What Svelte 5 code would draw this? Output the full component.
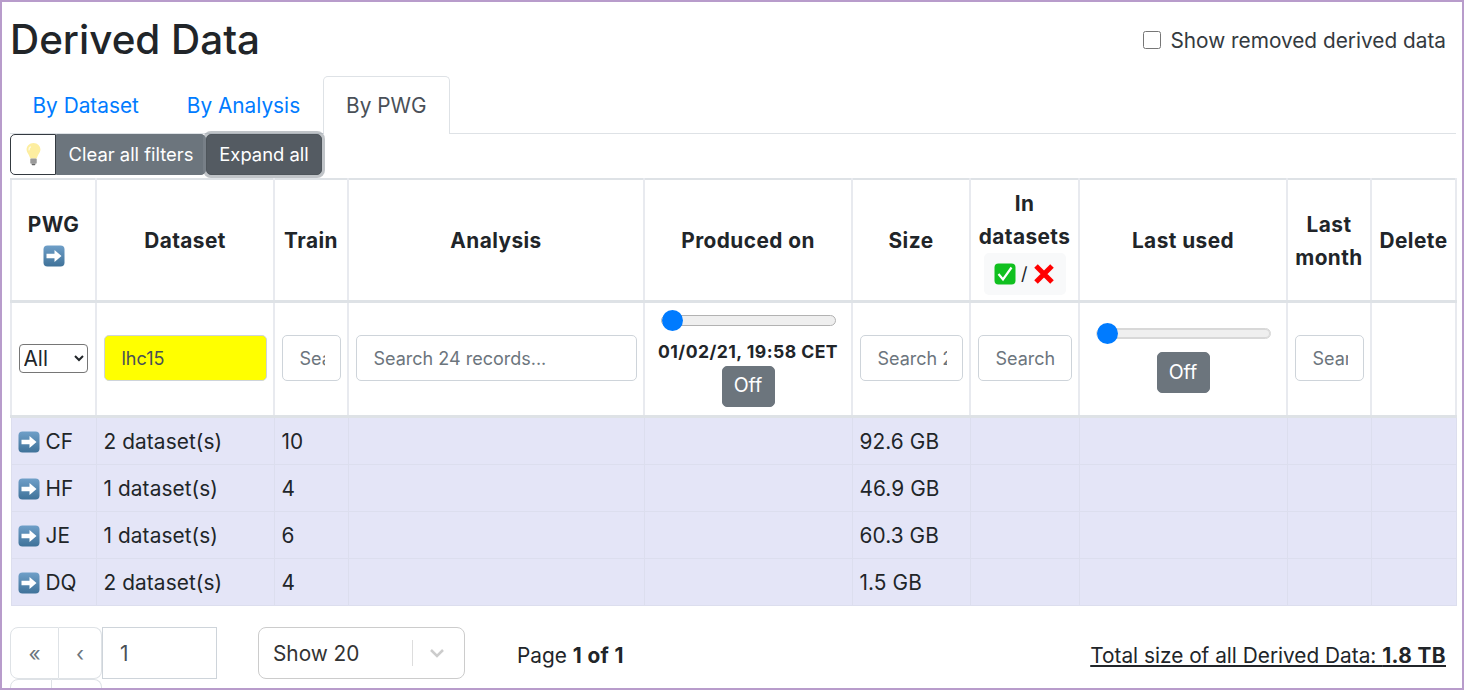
<script lang="ts">
	const rows = [
		{ pwg: 'CF', datasets: '2 dataset(s)', train: '10', size: '92.6 GB' },
		{ pwg: 'HF', datasets: '1 dataset(s)', train: '4', size: '46.9 GB' },
		{ pwg: 'JE', datasets: '1 dataset(s)', train: '6', size: '60.3 GB' },
		{ pwg: 'DQ', datasets: '2 dataset(s)', train: '4', size: '1.5 GB' }
	];
</script>

{#snippet arrow()}
	<svg class="arrow" viewBox="0 0 22 22" aria-hidden="true">
		<defs>
			<linearGradient id="arrowbg" x1="0" y1="0" x2="0" y2="1">
				<stop offset="0" stop-color="#6f9fc8" />
				<stop offset="1" stop-color="#3f7299" />
			</linearGradient>
		</defs>
		<rect x="0.5" y="0.5" width="21" height="21" rx="4" fill="url(#arrowbg)" />
		<path d="M3.5 8.8h8V5l7 6-7 6v-3.8h-8z" fill="#fff" />
	</svg>
{/snippet}

<div class="frame">
	<header class="top">
		<h1>Derived Data</h1>
		<label class="removed"><input type="checkbox" /> Show removed derived data</label>
	</header>

	<nav class="tabs">
		<a href="#dataset">By Dataset</a>
		<a href="#analysis">By Analysis</a>
		<a href="#pwg" class="active">By PWG</a>
	</nav>

	<div class="toolbar">
		<button class="btn light" aria-label="Hints">
			<svg viewBox="0 0 18 26" width="17" height="24" aria-hidden="true">
				<path d="M9 1C4.6 1 1.5 4.2 1.5 8.2c0 3.6 3.2 5.6 3.9 9.8h7.2c.7-4.2 3.9-6.2 3.9-9.8C16.5 4.2 13.4 1 9 1z" fill="#fdeea0" />
				<path d="M6 5c-1.5 1-2 2.5-1.8 4" stroke="#fffbe3" stroke-width="1.5" fill="none" />
				<rect x="5.5" y="18" width="7" height="5.5" rx="1" fill="#9a9a9a" />
				<rect x="7" y="23.5" width="4" height="1.8" rx=".8" fill="#666" />
			</svg>
		</button>
		<button class="btn clear">Clear all filters</button>
		<button class="btn expand">Expand all</button>
	</div>

	<table>
		<colgroup>
			<col style="width:85px" /><col style="width:178px" /><col style="width:74px" /><col style="width:296px" />
			<col style="width:208px" /><col style="width:118px" /><col style="width:109px" /><col style="width:208px" />
			<col style="width:84px" /><col style="width:85px" />
		</colgroup>
		<thead>
			<tr class="heads">
				<th>PWG<br />{@render arrow()}</th>
				<th>Dataset</th>
				<th>Train</th>
				<th>Analysis</th>
				<th>Produced on</th>
				<th>Size</th>
				<th>
					In datasets
					<span class="badge">
						<svg viewBox="0 0 22 22" width="22" height="22" aria-hidden="true">
							<rect x="0.5" y="0.5" width="21" height="21" rx="4" fill="#10c01f" />
							<path d="M4.5 11l4.5 5.5L17.5 4.5" stroke="#fff" stroke-width="2.2" fill="none" />
						</svg>
						<span class="slash">/</span>
						<svg viewBox="0 0 22 22" width="22" height="22" aria-hidden="true">
							<path d="M3 3l16 16M19 3L3 19" stroke="#f00" stroke-width="5" />
						</svg>
					</span>
				</th>
				<th>Last used</th>
				<th>Last month</th>
				<th>Delete</th>
			</tr>
			<tr class="filters">
				<th>
					<select><option>All</option></select>
				</th>
				<th><input class="search hit" value="lhc15" /></th>
				<th><input class="search" placeholder="Search 24 records..." /></th>
				<th><input class="search" placeholder="Search 24 records..." /></th>
				<th>
					<input class="range" type="range" min="0" max="100" value="0" />
					<div class="date">01/02/21, 19:58 CET</div>
					<button class="btn off">Off</button>
				</th>
				<th><input class="search" placeholder="Search 24 records..." /></th>
				<th><input class="search" placeholder="Search" /></th>
				<th>
					<input class="range used" type="range" min="0" max="100" value="0" />
					<button class="btn off">Off</button>
				</th>
				<th><input class="search" placeholder="Search 24 records..." /></th>
				<th></th>
			</tr>
		</thead>
		<tbody>
			{#each rows as row}
				<tr>
					<td class="pwg">{@render arrow()} {row.pwg}</td>
					<td>{row.datasets}</td>
					<td>{row.train}</td>
					<td></td>
					<td></td>
					<td>{row.size}</td>
					{#each [1, 2, 3, 4] as _}
						<td></td>
					{/each}
				</tr>
			{/each}
		</tbody>
	</table>

	<footer class="foot">
		<div class="pager">
			<div class="pages">
				<button class="pg first">«</button>
				<button class="pg prev">‹</button>
				<input class="goto" value="1" />
				<button class="pg next" aria-label="Next"></button>
				<button class="pg last" aria-label="Last"></button>
			</div>
		</div>
		<div class="show">
			<span class="show-val">Show 20</span>
			<span class="sep"></span>
			<svg viewBox="0 0 20 20" width="20" height="20" aria-hidden="true">
				<path d="M4 7l6 6 6-6" stroke="#ccc" stroke-width="2.5" fill="none" />
			</svg>
		</div>
		<div class="page-of">Page <b>1 of 1</b></div>
		<div class="total">Total size of all Derived Data: <b>1.8 TB</b></div>
	</footer>
</div>

<style>
	:global(body) {
		margin: 0;
		overflow: hidden;
		background: #fff;
	}

	.frame {
		box-sizing: border-box;
		height: 690px;
		border: 2px solid #b89ccb;
		padding: 0 6px 0 8px;
		overflow: hidden;
		font-family: Inter, sans-serif;
		font-size: 20.8px;
		color: #212529;
	}

	b {
		letter-spacing: 0.4px;
	}

	.top {
		display: flex;
		justify-content: space-between;
		align-items: center;
		height: 74px;
	}

	h1 {
		margin: 2px 0 0;
		font-size: 40.4px;
		font-weight: 500;
		line-height: 74px;
	}

	.removed {
		display: flex;
		align-items: center;
		gap: 9px;
		padding-right: 10px;
		color: #343a40;
		margin-top: 3px;
	}

	.removed input {
		width: 18px;
		height: 18px;
		margin: -2px 0 0;
	}

	.tabs {
		display: flex;
		height: 57px;
		border-bottom: 1px solid #dee2e6;
		box-sizing: content-box;
	}

	.tabs a {
		padding: 0 22.5px;
		line-height: 58px;
		color: #007bff;
		text-decoration: none;
		border: 1px solid transparent;
		border-bottom: 0;
		border-radius: 5px 5px 0 0;
		height: 58px;
		box-sizing: border-box;
		margin-bottom: -1px;
	}

	.tabs a:first-child {
		padding: 0 23.5px 0 21.5px;
	}

	.tabs a.active {
		color: #495057;
		background: #fff;
		border-color: #dee2e6;
		margin-left: -1px;
	}

	.toolbar {
		display: flex;
		height: 41px;
	}

	.btn {
		font: inherit;
		font-size: 18.4px;
		color: #fff;
		background: #6c757d;
		border: 1px solid #6c757d;
		border-radius: 5px;
		padding: 0 0 2px;
		white-space: nowrap;
		cursor: pointer;
	}

	.btn.light {
		width: 46px;
		background: #fff;
		border-color: #343a40;
		border-radius: 5px 0 0 5px;
		display: flex;
		align-items: center;
		justify-content: center;
	}

	.btn.clear {
		width: 150px;
		border-radius: 0 5px 5px 0;
	}

	.btn.expand {
		width: 116px;
		margin-right: 0;
		background: #545b62;
		border-color: #4e555b;
		box-shadow: 0 0 0 3px rgba(130, 138, 145, 0.5);
		position: relative;
	}

	table {
		table-layout: fixed;
		border-collapse: collapse;
		width: 1445px;
		margin: 3px 0 0;
	}

	th,
	td {
		border: 2px solid #e8eaef;
		padding: 0 6.5px;
	}

	.heads th {
		height: 119px;
		border-top: 2px solid #dee2e6;
		border-bottom: 3px solid #dee2e6;
		font-weight: 700;
		letter-spacing: 0.45px;
		line-height: 33px;
		text-align: center;
		padding-top: 1px;
	}

	.heads .arrow {
		vertical-align: -2px;
	}

	.filters th {
		height: 110px;
		padding-bottom: 2px;
		border-bottom: 3px solid #dee2e6;
		text-align: center;
		font-weight: 700;
	}

	.arrow {
		width: 22px;
		height: 22px;
		vertical-align: -4px;
	}

	.badge {
		display: flex;
		align-items: center;
		justify-content: center;
		gap: 5px;
		width: 82px;
		height: 42px;
		margin: 0 auto;
		background: #f8f9fa;
		border-radius: 5px;
		font-weight: 400;
	}

	.slash {
		font-size: 18px;
	}

	select {
		width: 69px;
		height: 29px;
		font: 20.8px Inter, sans-serif;
		color: #212529;
		background: #fff;
		border: 1px solid #767676;
		border-radius: 4px;
		display: block;
		margin: 0;
	}

	.search {
		box-sizing: border-box;
		display: block;
		width: 100%;
		height: 46px;
		margin: 0;
		padding: 0 15px 0 17px;
		font: 400 18px Inter, sans-serif;
		color: #495057;
		background: #fff;
		border: 1px solid #ced4da;
		border-radius: 5px;
	}

	.search::placeholder {
		color: #6c757d;
		opacity: 1;
	}

	.search.hit {
		background: #ff0;
	}

	.range {
		-webkit-appearance: none;
		appearance: none;
		display: block;
		box-sizing: border-box;
		width: 175px;
		height: 21px;
		margin: 0 auto;
		background: transparent;
	}

	.range::-webkit-slider-runnable-track {
		height: 11px;
		background: #efefef;
		border: 1px solid #b2b2b2;
		border-radius: 6px;
		box-sizing: border-box;
	}

	.range.used::-webkit-slider-runnable-track {
		border-color: #d8d8d8;
		box-shadow: inset 0 0 0 1px #d8d8d8;
	}

	.range::-webkit-slider-thumb {
		-webkit-appearance: none;
		width: 21px;
		height: 21px;
		margin-top: -6px;
		border-radius: 50%;
		background: #007bff;
	}

	.date {
		font-size: 17.6px;
		letter-spacing: 0.45px;
		line-height: 24px;
		margin: 9px 0 2px;
		white-space: nowrap;
	}

	.btn.off {
		width: 53px;
		height: 41px;
		font-weight: 400;
		font-size: 19.5px;
		display: block;
		margin: 0 auto;
	}

	.used + .btn.off {
		margin-top: 8px;
	}

	tbody td {
		height: 45px;
		background: #e4e5f7;
		border: 1px solid #dcdeee;
		padding: 1px 7px 0;
		letter-spacing: 0.1px;
	}

	tbody td.pwg {
		padding-left: 6px;
	}

	.foot {
		display: flex;
		align-items: flex-start;
		margin-top: 21px;
	}

	.pager {
		width: 248px;
	}

	.pages {
		display: flex;
		flex-wrap: wrap;
		width: 207px;
	}

	.pg {
		font: 20.8px Inter, sans-serif;
		color: #6c757d;
		background: #fff;
		border: 1px solid #dee2e6;
		height: 52px;
		box-sizing: border-box;
		padding: 0;
	}

	.first {
		width: 49px;
		border-radius: 8px 0 0 8px;
	}

	.prev {
		width: 43px;
		border-left: 0;
		border-radius: 0 8px 8px 0;
	}

	.next {
		width: 42px;
		border-radius: 8px 0 0 8px;
	}

	.last {
		width: 50px;
		border-left: 0;
		border-radius: 0 8px 8px 0;
	}

	.goto {
		box-sizing: border-box;
		width: 115px;
		height: 52px;
		margin: 0;
		padding: 0 17px;
		font: 20.8px Inter, sans-serif;
		color: #495057;
		border: 1px solid #ced4da;
	}

	.show {
		box-sizing: border-box;
		display: flex;
		align-items: center;
		width: 207px;
		height: 52px;
		border: 1px solid #cccccc;
		border-radius: 8px;
		padding-left: 14px;
		color: #333;
	}

	.show-val {
		flex: 1;
	}

	.sep {
		width: 1px;
		height: 26px;
		background: #ddd;
		margin-right: 14px;
	}

	.show svg {
		margin-right: 17px;
	}

	.page-of {
		margin-left: 52px;
		line-height: 58px;
	}

	.total {
		margin-left: auto;
		padding-right: 10px;
		line-height: 58px;
		text-decoration: underline;
	}
</style>
